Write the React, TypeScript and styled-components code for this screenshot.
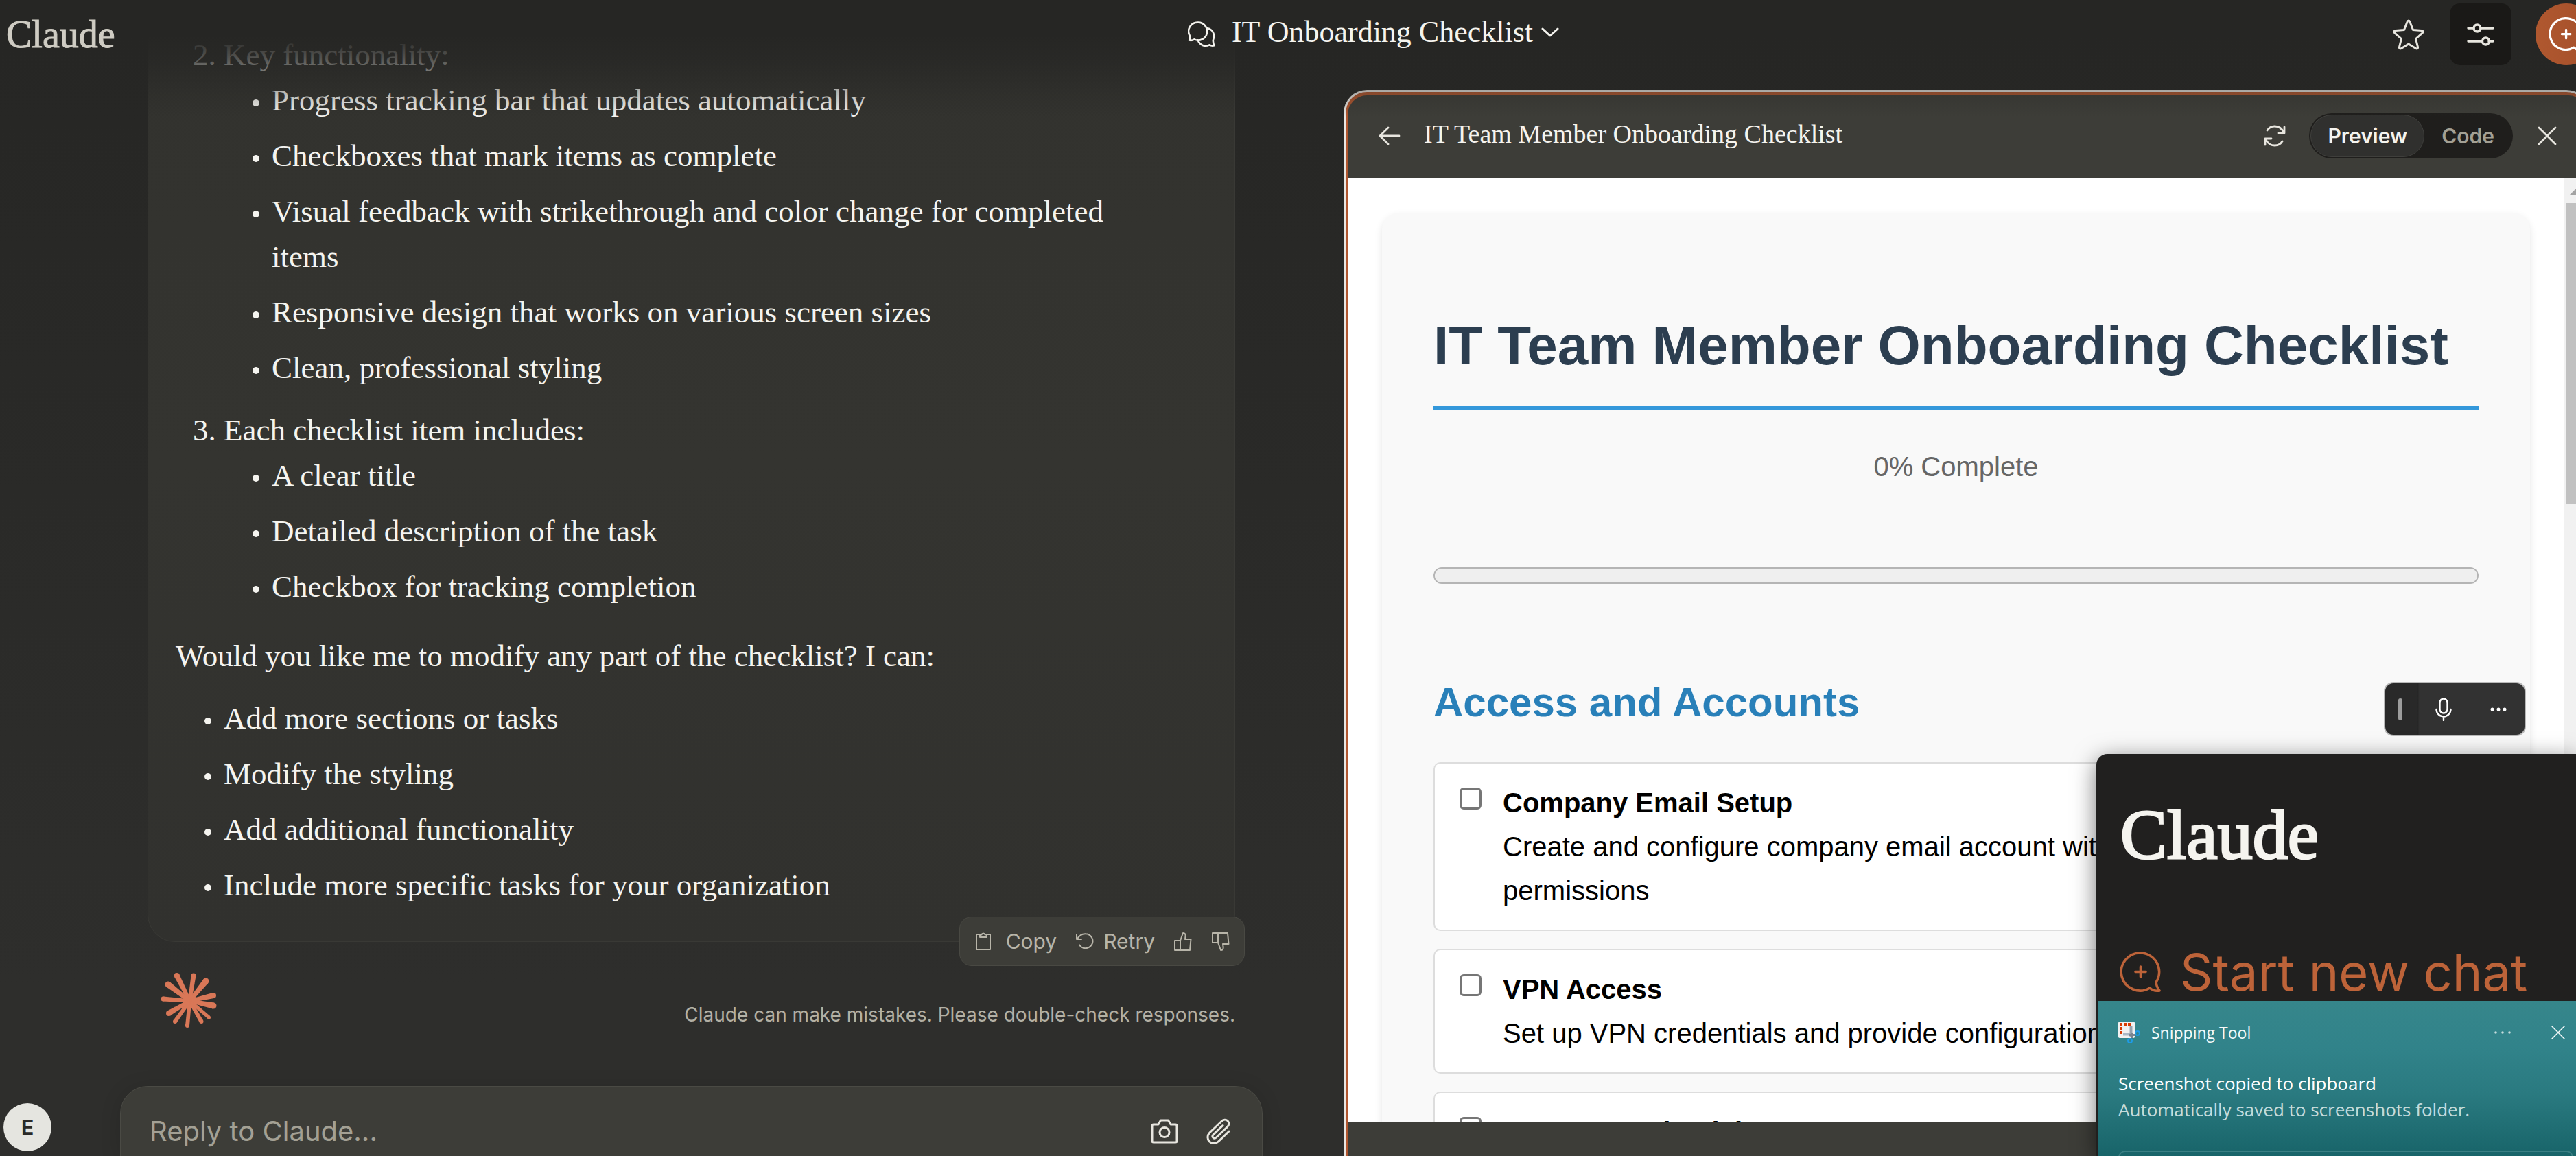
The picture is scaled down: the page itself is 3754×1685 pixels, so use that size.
import React from "react";
import styled, { createGlobalStyle } from "styled-components";

const serif = `"Liberation Serif", "Times New Roman", serif`;
const sans = `Inter, "Liberation Sans", sans-serif`;
const arial = `"Liberation Sans", Arial, sans-serif`;
const system = `"Open Sans", "Noto Sans", sans-serif`;

const GlobalStyle = createGlobalStyle`
  *, *::before, *::after { box-sizing: border-box; }
  body { margin: 0; background: #2b2b29; overflow: hidden; }
  button { border: 0; padding: 0; margin: 0; background: none; color: inherit; font: inherit; cursor: pointer; }
  svg { display: block; flex: none; }
`;

const Shell = styled.div`
  position: relative;
  height: 100vh;
  overflow: hidden;
  background: linear-gradient(#262624, #2e2e2c 85%);
  color: #f5f4ef;
  font-family: ${sans};
`;

/* ---------- top bar ---------- */

const TopBar = styled.header`
  position: absolute;
  inset: 0 0 auto 0;
  z-index: 2;
  height: 170px;
  padding: 5px 0 0 9px;
  display: grid;
  grid-template-columns: 1fr auto 1fr;
  align-items: start;
  background: linear-gradient(#262624 30%, rgba(38, 38, 36, 0.78) 50%, rgba(38, 38, 36, 0.3) 79%, rgba(38, 38, 36, 0));
  pointer-events: none;
`;

const Wordmark = styled.a<{ $large?: boolean }>`
  font-family: ${serif};
  font-size: ${(p) => (p.$large ? 102 : 56)}px;
  line-height: ${(p) => (p.$large ? 120 : 90)}px;
  color: ${(p) => (p.$large ? "#f5f4ef" : "#cfccc3")};
  -webkit-text-stroke: ${(p) => (p.$large ? 3 : 1)}px currentColor;
  text-decoration: none;
`;

const ChatTitle = styled.button`
  display: flex;
  align-items: center;
  height: 90px;
  gap: 24px;
  margin-left: 240px;
  font-family: ${serif};
  font-size: 44px;
  line-height: 66px;
`;

const TitleText = styled.span`
  display: flex;
  align-items: center;
  gap: 12px;
  margin-bottom: 6px;
`;

const TopActions = styled.div`
  display: flex;
  justify-content: flex-end;
  gap: 35px;
  margin-right: -31px;
`;

const TopButton = styled.button<{ $tone?: "dark" | "accent" }>`
  display: grid;
  place-items: center;
  width: 90px;
  height: 90px;
  margin-right: ${(p) => (p.$tone ? 0 : -20)}px;
  border-radius: ${(p) => (p.$tone === "accent" ? "50%" : "15px")};
  background: ${(p) =>
    p.$tone === "dark" ? "#1a1917" : p.$tone === "accent" ? "linear-gradient(90deg, #b0582f, #a44f2b)" : "none"};
  color: ${(p) => (p.$tone === "accent" ? "#fff" : "#e8e6df")};
`;

/* ---------- main columns ---------- */

const Columns = styled.main`
  display: grid;
  grid-template-columns: 1958fr 1796fr;
  height: 100%;
`;

const ChatColumn = styled.section`
  display: grid;
  grid-template-columns: 175px minmax(0, 1fr);
  padding-right: 118px;
  min-height: 0;
`;

const Rail = styled.nav`
  display: flex;
  align-items: flex-end;
  padding: 0 0 7px 5px;
`;

const Avatar = styled.button`
  width: 70px;
  height: 70px;
  border-radius: 50%;
  background: #e5e5e0;
  color: #2b2a27;
  font-size: 30px;
  font-weight: 700;
`;

const Conversation = styled.div`
  display: flex;
  flex-direction: column;
  justify-content: flex-end;
  min-width: 0;
  height: 100vh;

  & > * { flex: none; }
`;

const Message = styled.article`
  position: relative;
  margin: 0 40px;
  padding: 60px 120px 49px 40px;
  border: 1px solid #393935;
  border-radius: 40px;
  background: linear-gradient(#32322e, #343430 50%, #31312e);
  font-family: ${serif};
  font-size: 45px;
  line-height: 66px;

  p { margin: 35px 0 25px; }
`;

const Numbered = styled.ol`
  margin: 0;
  padding: 0 0 0 70px;

  & > li + li { margin-top: 25px; }
  & > li::marker { content: counter(list-item) ". "; }
`;

const Bullets = styled.ul`
  margin: 0;
  padding: 0 0 0 70px;
  list-style: none;

  & > li { position: relative; }
  & > li + li { margin-top: 15px; }
  & > li::before {
    content: "";
    position: absolute;
    left: -28px;
    top: 32px;
    width: 10px;
    height: 10px;
    border-radius: 50%;
    background: currentColor;
  }
`;

const MessageTools = styled.div`
  position: absolute;
  right: -15px;
  bottom: -36px;
  display: flex;
  align-items: center;
  gap: 27px;
  height: 72px;
  padding: 0 20px 0 22px;
  border: 1px solid #494943;
  border-radius: 18px;
  background: #3d3d38;
  color: #b8b5a9;
  font-family: ${sans};
  font-size: 30px;
  line-height: 40px;
`;

const ToolButton = styled.button<{ $gap?: number }>`
  display: flex;
  align-items: center;
  gap: ${(p) => p.$gap ?? 0}px;
`;

const Footnote = styled.div`
  display: flex;
  justify-content: space-between;
  align-items: flex-start;
  height: 210px;
  padding: 44px 40px 0 60px;
`;

const Disclaimer = styled.a`
  margin-top: 32px;
  color: #b3b0a4;
  font-size: 28px;
  line-height: 60px;
  text-decoration: none;
`;

const Composer = styled.form`
  display: flex;
  align-items: center;
  gap: 40px;
  height: 102px;
  padding: 34px 46px 6px 42px;
  border: 1px solid #4a4a44;
  border-bottom: 0;
  border-radius: 40px 40px 0 0;
  background: #3d3d38;
  box-shadow: 0 4px 30px rgba(0, 0, 0, 0.14);
  color: #e8e6df;
`;

const Reply = styled.input`
  flex: 1;
  min-width: 0;
  padding: 0;
  border: 0;
  outline: 0;
  background: none;
  color: #f5f4ef;
  font-family: ${sans};
  font-size: 40px;
  line-height: 60px;

  &::placeholder { color: #a3a094; opacity: 1; }
`;

/* ---------- artifact panel ---------- */

const Artifact = styled.section`
  display: flex;
  flex-direction: column;
  min-width: 0;
  margin: 131px -20px 0 0;
  border: 3px solid #e9e6e2;
  border-bottom: 0;
  border-radius: 34px 34px 0 0;
  background: #b0562f;
  height: calc(100vh - 131px);
  overflow: hidden;
`;

const ArtifactInner = styled.div`
  display: flex;
  flex-direction: column;
  flex: 1;
  min-height: 0;
  margin: 5px 0 0 3px;
  border-radius: 28px 28px 0 0;
  background: #3d3d38;
  overflow: hidden;
`;

const ArtifactBar = styled.div`
  display: flex;
  align-items: center;
  height: 121px;
  padding: 0 45px 4px 45px;
  color: #e8e6df;
`;

const ArtifactTitle = styled.h2`
  flex: 1;
  margin: 0 0 6px 34px;
  font-family: ${serif};
  font-weight: 400;
  font-size: 38px;
  line-height: 60px;
  color: #f5f4ef;
`;

const Switch = styled.div`
  display: flex;
  height: 66px;
  margin: 0 36px 0 34px;
  padding: 2px;
  border-radius: 33px;
  background: #1f1e1c;
`;

const SwitchButton = styled.button<{ $on?: boolean }>`
  padding: 0 24px;
  border: 1px solid ${(p) => (p.$on ? "#3f3f3c" : "transparent")};
  border-radius: 31px;
  background: ${(p) => (p.$on ? "#30302e" : "none")};
  color: ${(p) => (p.$on ? "#f5f4ef" : "#a3a094")};
  font-size: 30px;
  font-weight: 600;
`;

const Frame = styled.div`
  display: grid;
  grid-template-columns: minmax(0, 1fr) 34px;
  flex: 1;
  min-height: 0;
  margin-bottom: 49px;
  background: #fff;
  color: #000;
  font-family: ${arial};
  font-size: 40px;
  line-height: 64px;
`;

const Sheet = styled.div`
  min-width: 0;
  overflow: hidden;
  padding: 50px 50px 0;
`;

const Scrollbar = styled.div`
  display: flex;
  flex-direction: column;
  align-items: center;
  gap: 12px;
  padding: 14px 0 0 2px;
  background: #f1f1f1;
  color: #a3a3a3;
`;

const Thumb = styled.div`
  width: 100%;
  height: 438px;
  background: #c1c1c1;
`;

const Checklist = styled.div`
  min-height: 1500px;
  padding: 130px 75px 0;
  border-radius: 25px;
  background: #f9f9f9;
  box-shadow: 0 5px 12px rgba(0, 0, 0, 0.1);
`;

const Heading = styled.h1`
  margin: 0;
  padding-bottom: 24px;
  border-bottom: 5px solid #3498db;
  color: #2c3e50;
  font-size: 80px;
  line-height: 128px;
`;

const Status = styled.p`
  margin: 51px 0 0;
  color: #666;
  text-align: center;
`;

const Progress = styled.progress`
  display: block;
  appearance: none;
  width: 100%;
  height: 24px;
  margin-top: 115px;
  border: 2px solid #b5b5b5;
  border-radius: 12px;
  background: #efefef;
  overflow: hidden;

  &::-webkit-progress-bar { background: #efefef; }
  &::-webkit-progress-value { background: #3498db; }
`;

const Section = styled.h2`
  margin: 125px 0 39px;
  color: #2980b9;
  font-size: 60px;
  line-height: 96px;
`;

const Task = styled.label`
  display: grid;
  grid-template-columns: 32px minmax(0, 1fr);
  gap: 31px;
  margin-bottom: 26px;
  padding: 25px 25px 25px 36px;
  border: 2px solid #ddd;
  border-radius: 10px;
  background: #fff;

  strong, span span { display: block; }
`;

const Tick = styled.input`
  appearance: none;
  width: 32px;
  height: 32px;
  margin: 10px 0 0;
  border: 3px solid #767676;
  border-radius: 6px;
  background: #fff;
`;

/* ---------- desktop overlays ---------- */

const VoiceBar = styled.div`
  position: absolute;
  z-index: 3;
  right: 73px;
  top: 994px;
  display: grid;
  grid-template-columns: 44px 82px 77px;
  place-items: center;
  width: 207px;
  height: 79px;
  border: 2px solid #b9b9b9;
  border-radius: 14px;
  background: linear-gradient(90deg, #292929 47px, #242424 47px, #323232 50px);
  color: #fff;
`;

const Grip = styled.span`
  width: 6px;
  height: 32px;
  border-radius: 3px;
  background: #9d9d9d;
`;

const MiniWindow = styled.aside`
  position: absolute;
  z-index: 3;
  right: 0;
  top: 1099px;
  bottom: 0;
  width: 699px;
  display: flex;
  flex-direction: column;
  border-radius: 16px 0 0 0;
  background: #21201f;
  box-shadow: 0 8px 34px rgba(0, 0, 0, 0.55);
  overflow: hidden;
`;

const MiniBody = styled.div`
  display: flex;
  flex: none;
  flex-direction: column;
  justify-content: space-between;
  align-items: flex-start;
  height: 360px;
  padding: 58px 35px 0;
`;

const NewChat = styled.button`
  display: flex;
  align-items: center;
  gap: 27px;
  color: #bd6339;
  font-size: 74px;
  line-height: 84px;
  white-space: nowrap;
`;

const Toast = styled.div`
  flex: 1;
  min-height: 0;
  margin-left: 2px;
  padding: 22px 4px 0 30px;
  background: linear-gradient(#36868b, #31838a 30%, #2a7a80 60%, #186469);
  color: #fff;
  font-family: ${system};
  font-size: 26px;
  line-height: 38px;
`;

const ToastHead = styled.div`
  display: flex;
  align-items: center;
  height: 48px;
  margin-bottom: 31px;
  font-size: 23px;
  color: #f4fafa;
`;

const ToastName = styled.span`
  flex: 1;
  margin-left: 16px;
`;

const ToastIcons = styled.div`
  display: flex;
  align-items: center;
  gap: 59px;
  margin-right: 12px;
`;

const ToastText = styled.div<{ $dim?: boolean }>`
  color: ${(p) => (p.$dim ? "#c5dcdd" : "#fff")};
`;

const ToastSlot = styled.button`
  display: block;
  width: 100%;
  height: 60px;
  margin-top: 41px;
  border: 2px solid #3a7f83;
  border-radius: 10px;
`;

/* ---------- icons ---------- */

type IconProps = { w: number; h: number; box: string; sw?: number; children: React.ReactNode };

const Icon = ({ w, h, box, sw = 3, children }: IconProps) => (
  <svg
    width={w}
    height={h}
    viewBox={box}
    fill="none"
    stroke="currentColor"
    strokeWidth={sw}
    strokeLinecap="round"
    strokeLinejoin="round"
    aria-hidden="true"
  >
    {children}
  </svg>
);

const ChatsIcon = () => (
  <Icon w={40} h={38} box="0 0 40 38" sw={2.6}>
    <path d="M14.500 1.600A13 13 0 1 1 9.500 26.300C7 28 5 28.200 2 27.600c1.200-2 1.500-4.200.8-6.600A13 13 0 0 1 14.500 1.600Z" />
    <path d="M28 10.300c8 .7 12.500 9 9 16.700-.5 2.800 0 5 1.500 8.300-3 .7-5 .2-7-1-6.500 3.500-14 .5-17-7" />
  </Icon>
);

const NewChatIcon = ({ size, sw }: { size: number; sw: number }) => (
  <Icon w={size} h={size} box="0 0 60 60" sw={sw}>
    <path d="M29.500 2A27.500 27.500 0 0 1 52.500 44c-.8 4 1 8 4.500 13-6 1-10 0-14-4A27.500 27.500 0 1 1 29.500 2Z" />
    <path d="M29.500 22v15M22 29.500h15" />
  </Icon>
);

const rays: [number, number, number][] = [
  [22.700, 5, 8], [47, 5, 7], [65, 13, 9], [76, 34, 8], [76, 49, 9], [69.500, 66, 5],
  [58.500, 72, 6], [38, 78, 6], [20, 72, 6], [11, 60, 8], [3, 39, 7], [10, 18, 9],
];

const Spark = () => (
  <svg width={82} height={82} viewBox="0 0 82 82" fill="#d97757" role="img" aria-label="Claude">
    <circle cx="41.500" cy="42" r="10" />
    {rays.map(([x, y, w]) => {
      const dx = x - 41.5;
      const dy = y - 42;
      const len = Math.hypot(dx, dy);
      const nx = -dy / len;
      const ny = dx / len;
      const r = w / 2;
      return (
        <g key={`${x}-${y}`}>
          <polygon
            points={`${41.5 + nx * 2.6},${42 + ny * 2.6} ${x + nx * r},${y + ny * r} ${x - nx * r},${y - ny * r} ${41.5 - nx * 2.6},${42 - ny * 2.6}`}
          />
          <circle cx={x} cy={y} r={r} />
        </g>
      );
    })}
  </svg>
);

const SnippingIcon = () => (
  <svg width={32} height={32} viewBox="0 0 32 32" aria-hidden="true">
    <rect width="24" height="24" rx="2" fill="#f1f1f1" />
    <path d="M2 4h16" stroke="#d83b01" strokeWidth="4" strokeDasharray="4 2" />
    <path d="M4 8v10" stroke="#d83b01" strokeWidth="4" strokeDasharray="4 2" />
    <path d="M7 18.500h15" stroke="#a9b8c6" strokeWidth="4" />
    <path d="M18.500 6v16" stroke="#98a3af" strokeWidth="4" />
    <path d="M20 16v8M15 19.500h10" stroke="#7b8590" strokeWidth="3" />
    <circle cx="28" cy="17" r="3" fill="none" stroke="#1f9be6" strokeWidth="2" />
    <circle cx="17" cy="28" r="3" fill="none" stroke="#1f9be6" strokeWidth="2" />
  </svg>
);

const ThumbPath = () => (
  <>
    <path d="M2 13h8v14H2z" />
    <path d="M10 13l4-11c3 0 4 2 3.500 5L17 11h8.500l-1.500 16H10" />
  </>
);

const TaskItem = ({ title, lines = [] }: { title: string; lines?: string[] }) => (
  <Task>
    <Tick type="checkbox" />
    <span>
      <strong>{title}</strong>
      {lines.map((line) => (
        <span key={line}>{line}</span>
      ))}
    </span>
  </Task>
);

export default function App() {
  return (
    <Shell>
      <GlobalStyle />

      <TopBar>
        <Wordmark href="#">Claude</Wordmark>
        <ChatTitle type="button">
          <ChatsIcon />
          <TitleText>
            IT Onboarding Checklist
            <Icon w={26} h={16} box="0 0 26 16">
              <path d="M2 3l11 10L24 3" />
            </Icon>
          </TitleText>
        </ChatTitle>
        <TopActions>
          <TopButton type="button" aria-label="Star">
            <Icon w={46} h={46} box="0 0 46 46">
              <path d="M23 3c1 0 1.500.8 2 2l4.500 11.500 12.500 1c2.500.3 2.800 2 1 3.600L33.500 29.500l3 12c.4 2.300-1 3.200-3 2L23 37l-10.500 6.500c-2 1.200-3.400.3-3-2l3-12L3 21.100c-1.800-1.600-1.500-3.300 1-3.600l12.500-1L21 5c.5-1.200 1-2 2-2Z" />
            </Icon>
          </TopButton>
          <TopButton type="button" $tone="dark" aria-label="Controls">
            <Icon w={40} h={34} box="0 0 40 34" sw={3.4}>
              <path d="M2 8h8M20 8h18M2 27h20M32 27h6" />
              <circle cx="15" cy="8" r="5" />
              <circle cx="27.500" cy="27" r="5" />
            </Icon>
          </TopButton>
          <TopButton type="button" $tone="accent" aria-label="New chat">
            <NewChatIcon size={50} sw={4} />
          </TopButton>
        </TopActions>
      </TopBar>

      <Columns>
        <ChatColumn>
          <Rail>
            <Avatar type="button">E</Avatar>
          </Rail>
          <Conversation>
            <Message>
              <Numbered start={2}>
                <li>
                  Key functionality:
                  <Bullets>
                    <li>Progress tracking bar that updates automatically</li>
                    <li>Checkboxes that mark items as complete</li>
                    <li>Visual feedback with strikethrough and color change for completed items</li>
                    <li>Responsive design that works on various screen sizes</li>
                    <li>Clean, professional styling</li>
                  </Bullets>
                </li>
                <li>
                  Each checklist item includes:
                  <Bullets>
                    <li>A clear title</li>
                    <li>Detailed description of the task</li>
                    <li>Checkbox for tracking completion</li>
                  </Bullets>
                </li>
              </Numbered>
              <p>Would you like me to modify any part of the checklist? I can:</p>
              <Bullets>
                <li>Add more sections or tasks</li>
                <li>Modify the styling</li>
                <li>Add additional functionality</li>
                <li>Include more specific tasks for your organization</li>
              </Bullets>
              <MessageTools>
                <ToolButton type="button" $gap={21}>
                  <Icon w={24} h={28} box="0 0 24 28" sw={2}>
                    <path d="M8 4H2v22h20V4h-6" />
                    <path d="M7 8V4.500h2.500a2.600 2.600 0 0 1 5 0H17V8Z" />
                  </Icon>
                  Copy
                </ToolButton>
                <ToolButton type="button" $gap={14}>
                  <Icon w={27} h={26} box="0 0 27 26" sw={2}>
                    <path d="M2 3v7h7M3 9.500C6 4 11 2 15 2.200a10.500 10.500 0 1 1-9 16" />
                  </Icon>
                  Retry
                </ToolButton>
                <ToolButton type="button" aria-label="Good response">
                  <Icon w={28} h={29} box="0 0 28 29" sw={2}>
                    <ThumbPath />
                  </Icon>
                </ToolButton>
                <ToolButton type="button" aria-label="Bad response">
                  <Icon w={28} h={29} box="0 0 28 29" sw={2}>
                    <g transform="matrix(1 0 0 -1 0 29)">
                      <ThumbPath />
                    </g>
                  </Icon>
                </ToolButton>
              </MessageTools>
            </Message>
            <Footnote>
              <Spark />
              <Disclaimer href="#">Claude can make mistakes. Please double-check responses.</Disclaimer>
            </Footnote>
            <Composer>
              <Reply aria-label="Reply to Claude" placeholder="Reply to Claude..." />
              <ToolButton type="button" aria-label="Take a screenshot">
                <Icon w={40} h={36} box="0 0 40 36" sw={3}>
                  <path d="M4 8h7l3.500-6h11L29 8h7a2 2 0 0 1 2 2v22a2 2 0 0 1-2 2H4a2 2 0 0 1-2-2V10a2 2 0 0 1 2-2Z" />
                  <circle cx="20" cy="19.500" r="7" />
                </Icon>
              </ToolButton>
              <ToolButton type="button" aria-label="Attach files">
                <Icon w={36} h={38} box="0 0 36 38" sw={3}>
                  <path d="M34 19 19 33.500c-4 4-10 4-13.500.5s-3.500-9 .3-13L23 4.500c3-3 6.500-3 9-.8 2.300 2.500 2.300 6-.5 9L15.500 28c-1.600 1.500-3.500 1.500-4.700.3s-1-3 .4-4.500L25 10.500" />
                </Icon>
              </ToolButton>
            </Composer>
          </Conversation>
        </ChatColumn>

        <Artifact>
          <ArtifactInner>
            <ArtifactBar>
              <ToolButton type="button" aria-label="Back">
                <Icon w={32} h={28} box="0 0 32 28" sw={2.800}>
                  <path d="M30 14H2M14 2 2 14l12 12" />
                </Icon>
              </ToolButton>
              <ArtifactTitle>IT Team Member Onboarding Checklist</ArtifactTitle>
              <ToolButton type="button" aria-label="Refresh">
                <Icon w={32} h={32} box="0 0 32 32" sw={2.800}>
                  <path d="M30 3v9h-9M29.500 11.500C26 4 20 2 16 2c-5 0-8.500 2-11 6M2 29v-9h9M2.500 20.500C6 28 12 30 16 30c5 0 8.500-2 11-6" />
                </Icon>
              </ToolButton>
              <Switch>
                <SwitchButton type="button" $on>Preview</SwitchButton>
                <SwitchButton type="button">Code</SwitchButton>
              </Switch>
              <ToolButton type="button" aria-label="Close">
                <Icon w={28} h={28} box="0 0 28 28" sw={2.800}>
                  <path d="M2 2l24 24M26 2 2 26" />
                </Icon>
              </ToolButton>
            </ArtifactBar>
            <Frame>
              <Sheet>
                <Checklist>
                  <Heading>IT Team Member Onboarding Checklist</Heading>
                  <Status>0% Complete</Status>
                  <Progress value={0} max={100} aria-label="Checklist progress" />
                  <Section>Access and Accounts</Section>
                  <TaskItem
                    title="Company Email Setup"
                    lines={["Create and configure company email account with", "permissions"]}
                  />
                  <TaskItem title="VPN Access" lines={["Set up VPN credentials and provide configuration"]} />
                  <TaskItem title="System Credentials" />
                </Checklist>
              </Sheet>
              <Scrollbar>
                <svg width="20" height="10" viewBox="0 0 20 10" fill="currentColor" aria-hidden="true">
                  <path d="M10 0l10 10H0z" />
                </svg>
                <Thumb />
              </Scrollbar>
            </Frame>
          </ArtifactInner>
        </Artifact>
      </Columns>

      <VoiceBar>
        <Grip />
        <button type="button" aria-label="Microphone">
          <Icon w={24} h={34} box="0 0 24 34" sw={2.400}>
            <rect x="6.500" y="1.500" width="11" height="21" rx="5.500" />
            <path d="M1.500 17a10.500 10.500 0 0 0 21 0M12 27.500V33" />
          </Icon>
        </button>
        <button type="button" aria-label="More options">
          <svg width="24" height="6" viewBox="0 0 24 6" fill="currentColor">
            <circle cx="3" cy="3" r="2.500" />
            <circle cx="12" cy="3" r="2.500" />
            <circle cx="21" cy="3" r="2.500" />
          </svg>
        </button>
      </VoiceBar>

      <MiniWindow>
        <MiniBody>
          <Wordmark href="#" $large>Claude</Wordmark>
          <NewChat type="button">
            <NewChatIcon size={60} sw={3.6} />
            Start new chat
          </NewChat>
        </MiniBody>
        <Toast role="status">
          <ToastHead>
            <SnippingIcon />
            <ToastName>Snipping Tool</ToastName>
            <ToastIcons>
              <button type="button" aria-label="Notification options">
                <svg width="24" height="4" viewBox="0 0 24 4" fill="#c5dcdd">
                  <circle cx="2" cy="2" r="1.800" />
                  <circle cx="12" cy="2" r="1.800" />
                  <circle cx="22" cy="2" r="1.800" />
                </svg>
              </button>
              <button type="button" aria-label="Dismiss">
                <Icon w={20} h={20} box="0 0 20 20" sw={1.600}>
                  <path d="M1 1l18 18M19 1 1 19" />
                </Icon>
              </button>
            </ToastIcons>
          </ToastHead>
          <ToastText>Screenshot copied to clipboard</ToastText>
          <ToastText $dim>Automatically saved to screenshots folder.</ToastText>
          <ToastSlot type="button" aria-label="Open screenshot" />
        </Toast>
      </MiniWindow>
    </Shell>
  );
}
